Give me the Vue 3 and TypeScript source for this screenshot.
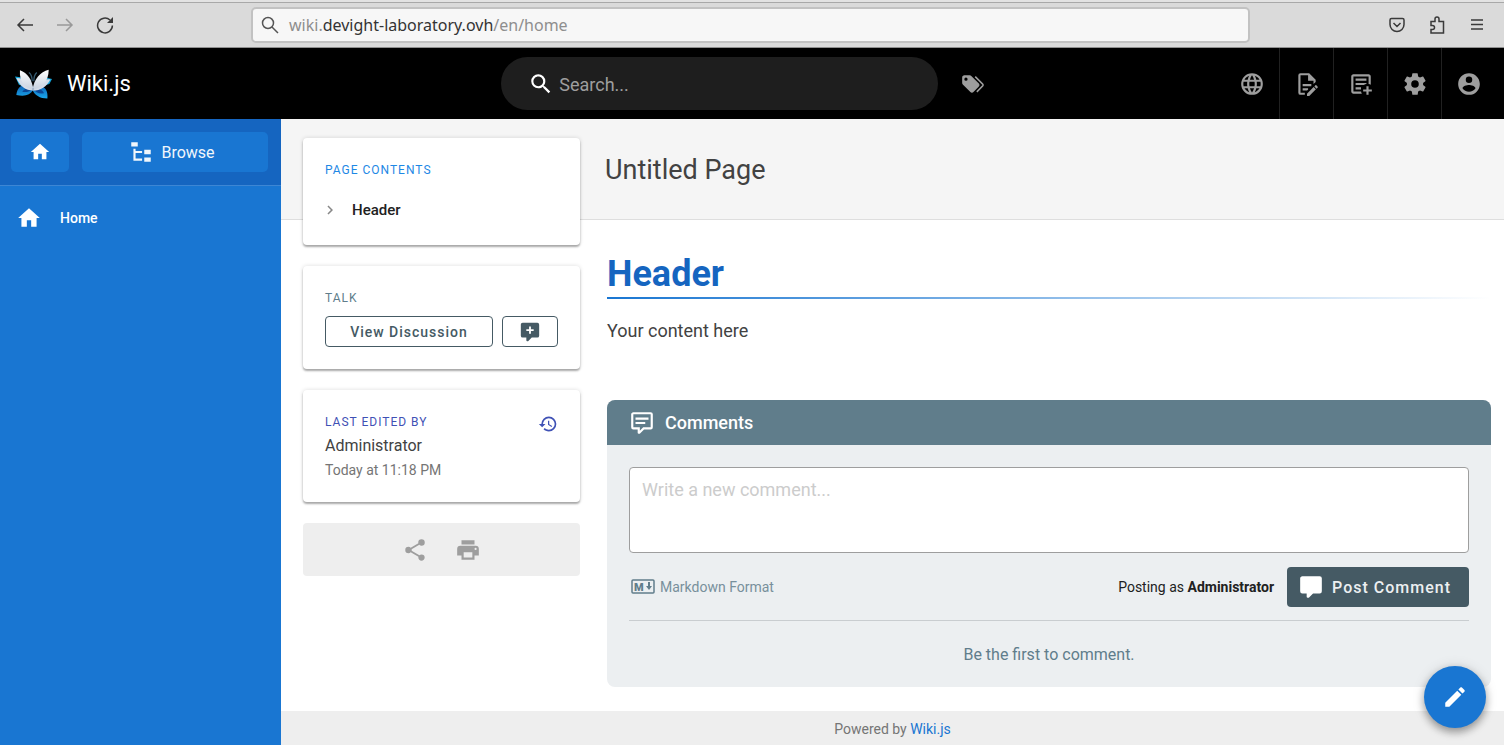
<script setup lang="ts">
import { ref } from 'vue'

interface ToolItem {
  label: string
  path: string
}

const search = ref('')
const comment = ref('')

const icons = {
  home: 'M10,20V14H14V20H19V12H22L12,3L2,12H5V20H10Z',
  tree: 'M3,3H9V7H3V3M15,10H21V14H15V10M15,17H21V21H15V17M13,13H7V18H13V20H7L5,20V9H7V11H13V13Z',
  magnify:
    'M9.5,3A6.5,6.5 0 0,1 16,9.5C16,11.11 15.41,12.59 14.44,13.73L14.71,14H15.5L20.5,19L19,20.5L14,15.5V14.71L13.73,14.44C12.59,15.41 11.11,16 9.5,16A6.5,6.5 0 0,1 3,9.5A6.5,6.5 0 0,1 9.5,3M9.5,5C7,5 5,7 5,9.5C5,12 7,14 9.5,14C12,14 14,12 14,9.5C14,7 12,5 9.5,5Z',
  tags: 'M5.5,9A1.5,1.5 0 0,0 7,7.5A1.5,1.5 0 0,0 5.5,6A1.5,1.5 0 0,0 4,7.5A1.5,1.5 0 0,0 5.5,9M17.41,11.58C17.77,11.94 18,12.44 18,13C18,13.55 17.78,14.05 17.41,14.41L12.41,19.41C12.05,19.77 11.55,20 11,20C10.45,20 9.95,19.78 9.58,19.41L2.59,12.42C2.22,12.05 2,11.55 2,11V6C2,4.89 2.89,4 4,4H9C9.55,4 10.05,4.22 10.41,4.58L17.41,11.58M13.54,5.71L14.54,4.71L21.41,11.58C21.78,11.94 22,12.45 22,13C22,13.55 21.78,14.05 21.42,14.41L16.04,19.79L15.04,18.79L20.75,13L13.54,5.71Z',
  chevron: 'M8.59,16.58L13.17,12L8.59,7.41L10,6L16,12L10,18L8.59,16.58Z',
  commentPlus:
    'M9,22A1,1 0 0,1 8,21V18H4A2,2 0 0,1 2,16V4C2,2.89 2.9,2 4,2H20A2,2 0 0,1 22,4V16A2,2 0 0,1 20,18H13.9L10.2,21.71C10,21.9 9.75,22 9.5,22H9M11,6V9H8V11H11V14H13V11H16V9H13V6H11Z',
  comment:
    'M9,22A1,1 0 0,1 8,21V18H4A2,2 0 0,1 2,16V4C2,2.89 2.9,2 4,2H20A2,2 0 0,1 22,4V16A2,2 0 0,1 20,18H13.9L10.2,21.71C10,21.9 9.75,22 9.5,22H9Z',
  commentText:
    'M9,22A1,1 0 0,1 8,21V18H4A2,2 0 0,1 2,16V4C2,2.89 2.9,2 4,2H20A2,2 0 0,1 22,4V16A2,2 0 0,1 20,18H13.9L10.2,21.71C10,21.9 9.75,22 9.5,22H9M10,16V19.08L13.08,16H20V4H4V16H10M6,7H18V9H6V7M6,11H15V13H6V11Z',
  history:
    'M13.5,8H12V13L16.28,15.54L17,14.33L13.5,12.25V8M13,3A9,9 0 0,0 4,12H1L4.96,16.03L9,12H6A7,7 0 0,1 13,5A7,7 0 0,1 20,12A7,7 0 0,1 13,19C11.07,19 9.32,18.21 8.06,16.94L6.64,18.36C8.27,20 10.5,21 13,21A9,9 0 0,0 22,12A9,9 0 0,0 13,3',
  share:
    'M18,16.08C17.24,16.08 16.56,16.38 16.04,16.85L8.91,12.7C8.96,12.47 9,12.24 9,12C9,11.76 8.96,11.53 8.91,11.3L15.96,7.19C16.5,7.69 17.21,8 18,8A3,3 0 0,0 21,5A3,3 0 0,0 18,2A3,3 0 0,0 15,5C15,5.24 15.04,5.47 15.09,5.7L8.04,9.81C7.5,9.31 6.79,9 6,9A3,3 0 0,0 3,12A3,3 0 0,0 6,15C6.79,15 7.5,14.69 8.04,14.19L15.16,18.34C15.11,18.55 15.08,18.77 15.08,19C15.08,20.61 16.39,21.91 18,21.91C19.61,21.91 20.92,20.61 20.92,19A2.92,2.92 0 0,0 18,16.08Z',
  print:
    'M18,3H6V7H18M19,12A1,1 0 0,1 18,11A1,1 0 0,1 19,10A1,1 0 0,1 20,11A1,1 0 0,1 19,12M16,19H8V14H16M19,8H5A3,3 0 0,0 2,11V17H6V21H18V17H22V11A3,3 0 0,0 19,8Z',
  pencil:
    'M20.71,7.04C21.1,6.65 21.1,6 20.71,5.63L18.37,3.29C18,2.9 17.35,2.9 16.96,3.29L15.12,5.12L18.87,8.87M3,17.25V21H6.75L17.81,9.93L14.06,6.18L3,17.25Z',
}

const tools: ToolItem[] = [
  {
    label: 'Language',
    path: 'M16.36,14C16.44,13.34 16.5,12.68 16.5,12C16.5,11.32 16.44,10.66 16.36,10H19.74C19.9,10.64 20,11.31 20,12C20,12.69 19.9,13.36 19.74,14M14.59,19.56C15.19,18.45 15.65,17.25 15.97,16H18.92C17.96,17.65 16.43,18.93 14.59,19.56M14.34,14H9.66C9.56,13.34 9.5,12.68 9.5,12C9.5,11.32 9.56,10.65 9.66,10H14.34C14.43,10.65 14.5,11.32 14.5,12C14.5,12.68 14.43,13.34 14.34,14M12,19.96C11.17,18.76 10.5,17.43 10.09,16H13.91C13.5,17.43 12.83,18.76 12,19.96M8,8H5.08C6.03,6.34 7.57,5.06 9.4,4.44C8.8,5.55 8.35,6.75 8,8M5.08,16H8C8.35,17.25 8.8,18.45 9.4,19.56C7.57,18.93 6.03,17.65 5.08,16M4.26,14C4.1,13.36 4,12.69 4,12C4,11.31 4.1,10.64 4.26,10H7.64C7.56,10.66 7.5,11.32 7.5,12C7.5,12.68 7.56,13.34 7.64,14M12,4.03C12.83,5.23 13.5,6.57 13.91,8H10.09C10.5,6.57 11.17,5.23 12,4.03M18.92,8H15.97C15.65,6.75 15.19,5.55 14.59,4.44C16.43,5.07 17.96,6.34 18.92,8M12,2C6.47,2 2,6.5 2,12A10,10 0 0,0 12,22A10,10 0 0,0 22,12A10,10 0 0,0 12,2Z',
  },
  {
    label: 'Edit page',
    path: 'M8,12H16V14H8V12M10,20H6V4H13V9H18V12.1L20,10.1V8L14,2H6A2,2 0 0,0 4,4V20A2,2 0 0,0 6,22H10V20M8,18H12.1L13,17.1V16H8V18M20.2,13C20.3,13 20.5,13.1 20.6,13.2L21.9,14.5C22.1,14.7 22.1,15.1 21.9,15.3L20.9,16.3L18.8,14.2L19.8,13.2C19.9,13.1 20,13 20.2,13M20.2,16.9L14.1,23H12V20.9L18.1,14.8L20.2,16.9Z',
  },
  {
    label: 'New page',
    path: 'M17,14H19V17H22V19H19V22H17V19H14V17H17V14M5,3H19C20.11,3 21,3.89 21,5V12.8C20.39,12.45 19.72,12.2 19,12.08V5H5V19H12.08C12.2,19.72 12.45,20.39 12.8,21H5C3.89,21 3,20.11 3,19V5C3,3.89 3.89,3 5,3M7,7H17V9H7V7M7,11H17V12.08C16.15,12.22 15.37,12.54 14.68,13H7V11M7,15H12V17H7V15Z',
  },
  {
    label: 'Administration',
    path: 'M12,15.5A3.5,3.5 0 0,1 8.5,12A3.5,3.5 0 0,1 12,8.5A3.5,3.5 0 0,1 15.5,12A3.5,3.5 0 0,1 12,15.5M19.43,12.97C19.47,12.65 19.5,12.33 19.5,12C19.5,11.67 19.47,11.34 19.43,11L21.54,9.37C21.73,9.22 21.78,8.95 21.66,8.73L19.66,5.27C19.54,5.05 19.27,4.96 19.05,5.05L16.56,6.05C16.04,5.66 15.5,5.32 14.87,5.07L14.5,2.42C14.46,2.18 14.25,2 14,2H10C9.75,2 9.54,2.18 9.5,2.42L9.13,5.07C8.5,5.32 7.96,5.66 7.44,6.05L4.95,5.05C4.73,4.96 4.46,5.05 4.34,5.27L2.34,8.73C2.21,8.95 2.27,9.22 2.46,9.37L4.57,11C4.53,11.34 4.5,11.67 4.5,12C4.5,12.33 4.53,12.65 4.57,12.97L2.46,14.63C2.27,14.78 2.21,15.05 2.34,15.27L4.34,18.73C4.46,18.95 4.73,19.03 4.95,18.95L7.44,17.94C7.96,18.34 8.5,18.68 9.13,18.93L9.5,21.58C9.54,21.82 9.75,22 10,22H14C14.25,22 14.46,21.82 14.5,21.58L14.87,18.93C15.5,18.67 16.04,18.34 16.56,17.94L19.05,18.95C19.27,19.03 19.54,18.95 19.66,18.73L21.66,15.27C21.78,15.05 21.73,14.78 21.54,14.63L19.43,12.97Z',
  },
  {
    label: 'Account',
    path: 'M12,19.2C9.5,19.2 7.29,17.92 6,16C6.03,14 10,12.9 12,12.9C14,12.9 17.97,14 18,16C16.71,17.92 14.5,19.2 12,19.2M12,5A3,3 0 0,1 15,8A3,3 0 0,1 12,11A3,3 0 0,1 9,8A3,3 0 0,1 12,5M12,2A10,10 0 0,0 2,12A10,10 0 0,0 12,22A10,10 0 0,0 22,12C22,6.47 17.5,2 12,2Z',
  },
]
</script>

<template>
  <div class="page">
    <div class="browser">
      <div class="browser-nav">
        <button type="button" aria-label="Back">
          <svg class="i18" viewBox="0 0 18 18"><path class="line" d="M17 9H2M8 3L2 9l6 6" /></svg>
        </button>
        <button type="button" aria-label="Forward" class="dim">
          <svg class="i18" viewBox="0 0 18 18"><path class="line" d="M1 9h15M10 3l6 6-6 6" /></svg>
        </button>
        <button type="button" aria-label="Reload">
          <svg class="i18" viewBox="0 0 18 18">
            <path class="line" d="M14 4a7.4 7.4 0 1 0 2.400 5.500" />
            <path d="M17 1v6h-6z" />
          </svg>
        </button>
      </div>
      <div class="address">
        <svg class="i18" viewBox="0 0 18 18">
          <circle class="line" cx="7" cy="7" r="5.500" />
          <path class="line" d="M11 11l6 6" />
        </svg>
        <span class="url">wiki.<b>devight-laboratory.ovh</b>/en/home</span>
      </div>
      <div class="browser-tools">
        <button type="button" aria-label="Save to Pocket">
          <svg class="i18" viewBox="0 0 18 18">
            <path class="line" d="M3.500 2.500h11a1.500 1.500 0 0 1 1.500 1.500v4.500a7 7 0 0 1-14 0V4a1.500 1.500 0 0 1 1.500-1.500zM5.500 7L9 10.500 12.500 7" />
          </svg>
        </button>
        <button type="button" aria-label="Extensions">
          <svg class="i18" viewBox="0 0 18 18">
            <path class="line" d="M3 5.500h4V3a2 2 0 0 1 4 0v2.500h4.500V17H3v-3.500h1.500a2 2 0 0 0 0-4H3z" />
          </svg>
        </button>
        <button type="button" aria-label="Menu">
          <svg class="i18" viewBox="0 0 18 18"><path class="line" d="M3 4h12M3 8.500h12M3 13h12" /></svg>
        </button>
      </div>
    </div>

    <header class="topbar">
      <a class="brand" href="#">
        <svg class="logo" viewBox="46 202 112 96" aria-hidden="true">
          <defs>
            <linearGradient id="lower" x1="0" y1="0" x2="0" y2="1">
              <stop offset="0" stop-color="#0a5cb0" />
              <stop offset="1" stop-color="#1ba8ec" />
            </linearGradient>
            <linearGradient id="upper" x1="0" y1="0" x2="0" y2="1">
              <stop offset="0" stop-color="#ffffff" />
              <stop offset="1" stop-color="#c6d0de" />
            </linearGradient>
          </defs>
          <path fill="#12a3d8" d="M46 227L68 230 90 264 58 252zM158 235L138 230 114 260 150 250z" />
          <path fill="url(#lower)" d="M102 260C82 244 54 250 50 283 72 288 92 286 102 266zM98 262C128 246 148 262 144 294 122 294 104 284 98 266z" />
          <path fill="#0b4796" d="M100 262C84 260 72 266 68 274 82 276 92 272 100 264zM101 264C118 262 130 268 134 278 118 280 108 274 101 264z" />
          <path fill="#d5dce8" d="M50 232C74 232 92 246 101 270 78 270 60 256 50 232zM153 236C130 234 112 246 100 270 124 270 142 258 153 236z" />
          <path fill="url(#upper)" d="M61 208C84 216 98 236 102 268 78 262 58 244 61 208zM148 207C122 214 104 234 99 268 126 262 148 244 148 207z" />
          <path fill="none" stroke="#34596f" stroke-width="4" d="M98 242C98 228 95 220 88 215M103 242C103 228 106 220 112 215" />
        </svg>
        <span>Wiki.js</span>
      </a>
      <div class="mid">
        <label class="search">
          <svg class="i26" viewBox="0 0 24 24"><path :d="icons.magnify" /></svg>
          <input v-model="search" type="text" placeholder="Search..." aria-label="Search" />
        </label>
        <button class="tool" type="button" aria-label="Browse by tags">
          <svg class="i26" viewBox="0 0 24 24"><path :d="icons.tags" /></svg>
        </button>
      </div>
      <nav class="tools">
        <button v-for="t in tools" :key="t.label" class="tool" type="button" :aria-label="t.label">
          <svg class="i26" viewBox="0 0 24 24"><path :d="t.path" /></svg>
        </button>
      </nav>
    </header>

    <div class="shell">
      <aside class="sidebar">
        <div class="side-head">
          <a class="side-btn home-btn" href="#" aria-label="Home">
            <svg class="i22" viewBox="0 0 24 24"><path :d="icons.home" /></svg>
          </a>
          <button class="side-btn browse-btn" type="button">
            <svg class="i26" viewBox="0 0 24 24"><path :d="icons.tree" /></svg>
            <span>Browse</span>
          </button>
        </div>
        <nav>
          <a class="side-link" href="#">
            <svg class="i26" viewBox="0 0 24 24"><path :d="icons.home" /></svg>
            <span>Home</span>
          </a>
        </nav>
      </aside>

      <div class="content">
        <main class="grid">
          <div class="title-strip"><h2>Untitled Page</h2></div>

          <aside class="cards">
            <section class="card toc">
              <h3 class="over blue">PAGE CONTENTS</h3>
              <a class="toc-link" href="#header">
                <svg class="i18" viewBox="0 0 24 24"><path :d="icons.chevron" /></svg>
                <span>Header</span>
              </a>
            </section>
            <section class="card talk">
              <h3 class="over slate">TALK</h3>
              <div class="talk-row">
                <button class="outlined wide" type="button">View Discussion</button>
                <button class="outlined narrow" type="button" aria-label="New comment">
                  <svg class="i22" viewBox="0 0 24 24"><path :d="icons.commentPlus" /></svg>
                </button>
              </div>
            </section>
            <section class="card edited">
              <div>
                <h3 class="over indigo">LAST EDITED BY</h3>
                <p class="author">Administrator</p>
                <p class="when">Today at 11:18 PM</p>
              </div>
              <button class="history" type="button" aria-label="History">
                <svg class="i20" viewBox="0 0 24 24"><path :d="icons.history" /></svg>
              </button>
            </section>
            <section class="actions">
              <button type="button" aria-label="Share">
                <svg class="i26" viewBox="0 0 24 24"><path :d="icons.share" /></svg>
              </button>
              <button type="button" aria-label="Print">
                <svg class="i26" viewBox="0 0 24 24"><path :d="icons.print" /></svg>
              </button>
            </section>
          </aside>

          <article class="article">
            <h1 id="header">Header</h1>
            <p class="body-text">Your content here</p>

            <section class="comments">
              <h2 class="comments-head">
                <svg class="i26" viewBox="0 0 24 24"><path :d="icons.commentText" /></svg>
                <span>Comments</span>
              </h2>
              <div class="comments-body">
                <textarea v-model="comment" placeholder="Write a new comment..." aria-label="Write a new comment"></textarea>
                <div class="post-row">
                  <svg class="markdown" viewBox="0 0 24 16" aria-hidden="true">
                    <rect x="1" y="1" width="22" height="13" rx="1" fill="none" stroke="currentColor" stroke-width="1.500" />
                    <text x="3" y="12" class="mark">M</text>
                    <path d="M17 3h2v4h2l-3 4-3-4h2z" />
                  </svg>
                  <span class="format">Markdown Format</span>
                  <span class="posting">Posting as <b>Administrator</b></span>
                  <button class="post" type="button">
                    <svg class="i26" viewBox="0 0 24 24"><path :d="icons.comment" /></svg>
                    <span>Post Comment</span>
                  </button>
                </div>
                <p class="empty">Be the first to comment.</p>
              </div>
            </section>
          </article>
        </main>
        <footer class="footer">Powered by&nbsp;<a href="#">Wiki.js</a></footer>
      </div>
    </div>

    <button class="fab" type="button" aria-label="Edit">
      <svg class="i26" viewBox="0 0 24 24"><path :d="icons.pencil" /></svg>
    </button>
  </div>
</template>

<style>
body {
  margin: 0;
}
</style>

<style scoped>
.page {
  display: flex;
  flex-direction: column;
  min-height: 100vh;
  background: #fff;
  color: #424242;
  font-family: Roboto, "Liberation Sans", sans-serif;
  font-size: 16px;
}
.page *,
.page {
  box-sizing: border-box;
}
h1,
h2,
h3,
p {
  margin: 0;
  font-weight: 400;
}
button {
  display: flex;
  align-items: center;
  justify-content: center;
  margin: 0;
  padding: 0;
  border: 0;
  background: none;
  color: inherit;
  font: inherit;
  cursor: pointer;
}
a {
  color: inherit;
  text-decoration: none;
}
svg {
  display: block;
  flex: none;
  fill: currentColor;
}
.i18 { width: 18px; height: 18px; }
.i20 { width: 20px; height: 20px; }
.i22 { width: 22px; height: 22px; }
.i26 { width: 26px; height: 26px; }
.line {
  fill: none;
  stroke: currentColor;
  stroke-width: 1.5;
}

.browser {
  display: flex;
  align-items: center;
  height: 48px;
  padding-top: 2px;
  border-bottom: 1px solid #8f8f8f;
  background: linear-gradient(#e2e2e2 2px, #a8a8a8 2px, #a8a8a8 3px, #dadada 3px);
  color: #3a3a3a;
}
.browser-nav {
  display: flex;
  flex: 0 0 251px;
  gap: 22px;
  padding-left: 16px;
}
.browser-nav .dim { color: #999; }
.address {
  display: flex;
  flex: 1;
  align-items: center;
  gap: 10px;
  height: 36px;
  padding: 0 8px;
  border: 2px solid #c2c2c2;
  border-radius: 5px;
  background: #f7f7f7;
  color: #555;
}
.url {
  color: #8e8e8e;
  font: 16px/22px "Noto Sans", sans-serif;
}
.url b {
  color: #333;
  font-weight: 400;
}
.browser-tools {
  display: flex;
  flex: 0 0 254px;
  justify-content: flex-end;
  gap: 22px;
  padding-right: 18px;
}

.topbar {
  display: grid;
  grid-template-columns: 1fr 1fr 1fr;
  height: 71px;
  background: #000;
  color: #9e9e9e;
}
.brand {
  display: flex;
  align-items: center;
  gap: 15px;
  padding-left: 15px;
  color: #fff;
  font-size: 22px;
}
.logo {
  width: 37px;
  height: 32px;
}
.mid {
  display: flex;
  align-items: center;
  gap: 8px;
  padding-right: 3px;
}
.search {
  display: flex;
  flex: 1;
  align-items: center;
  gap: 5px;
  height: 53px;
  padding: 0 27px;
  border-radius: 27px;
  background: #1e1e1e;
  color: #fff;
}
.search input {
  flex: 1;
  min-width: 0;
  padding: 2px 0 0;
  border: 0;
  outline: 0;
  background: none;
  color: #fff;
  font: 18px/24px Roboto, sans-serif;
}
.search input::placeholder {
  color: #9e9e9e;
  opacity: 1;
}
.tool {
  width: 54px;
  height: 71px;
}
.tools {
  display: flex;
  justify-content: flex-end;
  padding-right: 9px;
}
.tools .tool + .tool { border-left: 1px solid #212121; }

.shell {
  display: flex;
  flex: 1;
}
.sidebar {
  flex: 0 0 281px;
  background: #1976d2;
  color: #fff;
}
.side-head {
  display: flex;
  gap: 13px;
  padding: 13px 13px 13px 11px;
  border-bottom: 1px solid #3d86d4;
  background: #1565c0;
}
.side-btn {
  display: flex;
  align-items: center;
  justify-content: center;
  height: 40px;
  border-radius: 5px;
  background: #1976d2;
}
.home-btn { flex: 0 0 58px; }
.browse-btn {
  flex: 1;
  gap: 7px;
  padding-right: 7px;
  color: #f0f6fc;
}
.side-link {
  display: flex;
  align-items: center;
  gap: 18px;
  height: 44px;
  margin-top: 10px;
  padding-left: 16px;
  font-size: 14px;
  font-weight: 500;
}

.content {
  display: flex;
  flex: 1;
  flex-direction: column;
  min-width: 0;
}
.grid {
  display: grid;
  flex: 1;
  grid-template-columns: 299px 1fr;
  grid-template-rows: 101px 1fr;
}
.title-strip {
  display: flex;
  grid-area: 1 / 1 / 2 / 3;
  align-items: center;
  padding: 2px 0 0 324px;
  border-bottom: 1px solid #dedede;
  background: #f5f5f5;
}
.title-strip h2 { font-size: 27px; }
.cards {
  display: flex;
  grid-area: 1 / 1 / 3 / 2;
  flex-direction: column;
  gap: 21px;
  padding: 19px 0 0 22px;
}
.card {
  padding: 22px;
  border-radius: 4px;
  background: #fff;
  box-shadow: 0 2px 2px rgba(0, 0, 0, 0.3), 0 0 4px rgba(0, 0, 0, 0.14);
}
.over {
  font-size: 12px;
  line-height: 20px;
  letter-spacing: 1px;
}
.blue { color: #1e88e5; }
.slate { color: #607d8b; }
.indigo { color: #3f51b5; }
.toc-link {
  display: flex;
  align-items: center;
  gap: 13px;
  margin: 20px 0 3px;
  margin-left: -4px;
  color: #212121;
  font-size: 15px;
  font-weight: 500;
  line-height: 20px;
}
.toc-link svg { color: #888; }
.talk-row {
  display: flex;
  gap: 9px;
  margin-top: 8px;
}
.outlined {
  height: 31px;
  border: 1px solid #455a64;
  border-radius: 4px;
  color: #455a64;
  font-size: 14px;
  font-weight: 500;
  letter-spacing: 1px;
}
.wide { flex: 1; }
.narrow { flex: 0 0 56px; }
.edited {
  display: flex;
  align-items: flex-start;
  justify-content: space-between;
}
.author { line-height: 28px; }
.when {
  color: #757575;
  font-size: 14px;
  line-height: 20px;
}
.history {
  margin-top: 2px;
  color: #3f51b5;
}
.actions {
  display: flex;
  align-items: center;
  justify-content: center;
  gap: 27px;
  height: 53px;
  border-radius: 4px;
  background: #eee;
  color: #9e9e9e;
}

.article {
  display: flex;
  grid-area: 2 / 2 / 3 / 3;
  flex-direction: column;
  min-width: 0;
  padding: 32px 13px 24px 27px;
}
.article h1 {
  padding-bottom: 3px;
  background: linear-gradient(90deg, #1976d2, rgba(25, 118, 210, 0)) bottom / 100% 2px no-repeat;
  color: #1565c0;
  font-size: 36px;
  font-weight: 700;
  line-height: 44px;
}
.body-text {
  margin-top: 20px;
  font-size: 18px;
  line-height: 24px;
}
.comments {
  margin-top: 57px;
  border-radius: 8px;
  background: #eceff1;
  overflow: hidden;
}
.comments-head {
  display: flex;
  align-items: center;
  gap: 10px;
  height: 45px;
  padding-left: 22px;
  background: #607d8b;
  color: #fff;
  font-size: 18px;
  font-weight: 500;
}
.comments-body { padding: 22px 22px 19px; }
textarea {
  display: block;
  width: 100%;
  height: 86px;
  padding: 10px 12px;
  border: 1px solid #9e9e9e;
  border-radius: 4px;
  outline: 0;
  background: #fff;
  color: #424242;
  font: 18px/24px Roboto, sans-serif;
  resize: none;
}
textarea::placeholder {
  color: #ccc;
  opacity: 1;
}
.post-row {
  display: flex;
  align-items: center;
  padding: 14px 0 13px;
  border-bottom: 1px solid #c9cdd0;
}
.markdown {
  width: 24px;
  height: 16px;
  margin: 0 5px 0 2px;
  color: #607d8b;
}
.mark {
  font: 900 11px Roboto, sans-serif;
}
.format {
  flex: 1;
  color: #78909c;
  font-size: 14px;
}
.posting {
  margin-right: 13px;
  color: #212121;
  font-size: 14px;
}
.posting b { font-weight: 700; }
.post {
  gap: 8px;
  height: 40px;
  padding: 0 18px 0 11px;
  border-radius: 4px;
  background: #455a64;
  color: #eceff1;
  font-weight: 500;
  letter-spacing: 1px;
}
.post svg { color: #fff; }
.empty {
  padding-top: 20px;
  color: #607d8b;
  line-height: 27px;
  text-align: center;
}
.footer {
  display: flex;
  align-items: center;
  justify-content: center;
  height: 34px;
  padding-top: 2px;
  background: #eee;
  color: #757575;
  font-size: 14px;
}
.footer a { color: #1976d2; }

.fab {
  position: fixed;
  right: 18px;
  bottom: 17px;
  width: 62px;
  height: 62px;
  border-radius: 50%;
  background: #1976d2;
  box-shadow: 0 4px 8px rgba(0, 0, 0, 0.35), 0 1px 14px rgba(0, 0, 0, 0.12);
  color: #fff;
}
</style>
